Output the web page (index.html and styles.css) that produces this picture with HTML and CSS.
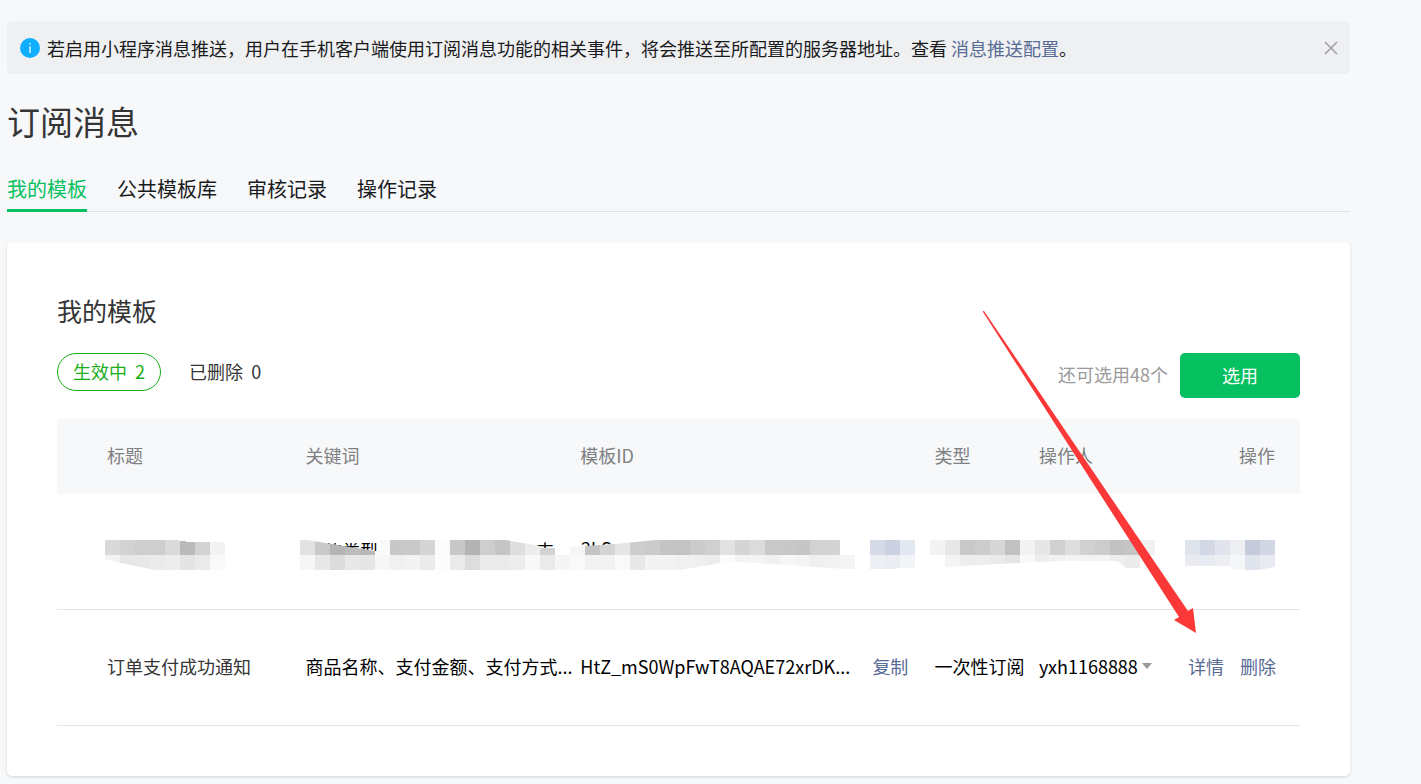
FILE: index.html
```html
<!DOCTYPE html>
<html lang="zh-CN">
<head>
<meta charset="utf-8">
<meta name="viewport" content="width=device-width, initial-scale=1">
<title>订阅消息</title>
<link rel="stylesheet" href="styles.css">
</head>
<body>
<main class="page">
  <div class="notice" role="status">
    <svg class="notice-icon" viewBox="0 0 20 20" aria-hidden="true"><circle cx="10" cy="10" r="10" fill="#10aeff"/><path d="M9.3 5h1.5v1.6H9.3zM9.3 8.2h1.5V15H9.3z" fill="#d4f0ff"/></svg>
    <p class="notice-text">若启用小程序消息推送，用户在手机客户端使用订阅消息功能的相关事件，将会推送至所配置的服务器地址。查看 <a class="link" href="#push">消息推送配置</a>。</p>
    <button class="notice-close" type="button" aria-label="关闭"><svg viewBox="0 0 14 14" aria-hidden="true"><path d="M1 1l12 12M13 1L1 13" stroke="#a2a3a5" stroke-width="1.6" fill="none"/></svg></button>
  </div>

  <h1 class="title">订阅消息</h1>

  <nav class="tabs">
    <a class="tab tab-active" href="#mine" aria-current="page">我的模板</a>
    <a class="tab" href="#public">公共模板库</a>
    <a class="tab" href="#review">审核记录</a>
    <a class="tab" href="#log">操作记录</a>
  </nav>

  <section class="card">
    <h2 class="card-title">我的模板</h2>
    <div class="toolbar">
      <div class="filters">
        <button class="filter filter-active" type="button">生效中&nbsp; 2</button>
        <button class="filter" type="button">已删除&nbsp; 0</button>
      </div>
      <div class="actions">
        <span class="quota">还可选用48个</span>
        <button class="primary" type="button">选用</button>
      </div>
    </div>

    <table class="templates">
      <colgroup>
        <col class="col-title"><col class="col-words"><col class="col-id"><col class="col-copy"><col class="col-type"><col class="col-user"><col class="col-ops">
      </colgroup>
      <thead>
        <tr><th scope="col">标题</th><th scope="col">关键词</th><th scope="col" colspan="2">模板ID</th><th scope="col">类型</th><th scope="col">操作人</th><th scope="col">操作</th></tr>
      </thead>
      <tbody>
        <tr>
          <td class="masked" colspan="7">
            <svg class="mosaic" viewBox="57 531 1243 42" role="img" aria-label="已隐藏">
              <defs>
                <clipPath id="visible-text"><path d="M320 543h58v8h-58zM536 542h19v6h-19zM580 542h35v5h-35z"/></clipPath>
                <clipPath id="shape-title"><path d="M105 540h74v1h7v1h39v28h-70l-34-7-13-3h-3z"/></clipPath>
                <clipPath id="shape-words"><path d="M300 540h7l68 11h5v-11h125l35 6v2h15v7h15v-8l15-1 30-2 40-4h185v15h15v14h-10l-105-7-20 1-40 7H300z"/></clipPath>
                <clipPath id="shape-copy"><path d="M870 540h45v28h-18v1h-27z"/></clipPath>
                <clipPath id="shape-user"><path d="M930 540h225v15h-15v13h-14l-8-7h-58l-40 2-75 4v-12h-15z"/></clipPath>
                <clipPath id="shape-ops"><path d="M1185 540h90v27l-17 3h-25l-4-4h-44z"/></clipPath>
              </defs>
              <g class="mosaic-text" clip-path="url(#visible-text)"><text x="324" y="558">的类型</text><text x="536" y="558">支</text><text x="581" y="556">2kS</text></g>
            </svg>
          </td>
        </tr>
        <tr>
          <td class="cell-title">订单支付成功通知</td>
          <td>商品名称、支付金额、支付方式...</td>
          <td>HtZ_mS0WpFwT8AQAE72xrDK...</td>
          <td><a class="link" href="#copy">复制</a></td>
          <td>一次性订阅</td>
          <td>
            <span class="picker">
              <select class="picker-select" aria-label="操作人"><option>yxh1168888</option></select>
              <svg class="picker-caret" viewBox="0 0 10 6" aria-hidden="true"><path d="M0 0h10L5 6z" fill="#999"/></svg>
            </span>
          </td>
          <td class="cell-ops"><span class="ops"><a class="link" href="#detail">详情</a><a class="link" href="#delete">删除</a></span></td>
        </tr>
      </tbody>
    </table>

    <svg class="arrow" viewBox="0 0 213 322" aria-hidden="true"><path d="M0 0l1 0L205 300l5-3 3 25-22-13 5-3L0 1z" fill="#fb3838"/></svg>
  </section>
</main>
<script src="mosaic.js"></script>
</body>
</html>
```

FILE: styles.css
```css
* { box-sizing: border-box; }

body {
  margin: 0;
  background: #f7f8fa;
  color: #1a1b1c;
  font-family: "Noto Sans CJK SC", "Open Sans", sans-serif;
  font-size: 18px;
  font-weight: 400;
  line-height: 26px;
}

button, select {
  font: inherit;
  color: inherit;
  background: none;
  border: 0;
  padding: 0;
  cursor: pointer;
}

h1, h2, p { margin: 0; font-weight: inherit; }

.link { color: #576b95; text-decoration: none; }

.page { padding: 21px 71px 8px 7px; }

.notice {
  display: flex;
  align-items: center;
  gap: 7px;
  padding: 14px 12px 13px 13px;
  border-radius: 5px;
  background: #eff0f2;
}
.notice-icon { flex: none; width: 20px; height: 20px; }
.notice-text { flex: 1; }
.notice-close { display: flex; }
.notice-close svg { width: 14px; height: 14px; }

.title {
  margin-top: 23px;
  color: #353535;
  font-size: 33px;
  line-height: 48px;
}

.tabs {
  display: flex;
  gap: 30px;
  margin-top: 30px;
  border-bottom: 1px solid #dfe0e2;
}
.tab {
  margin-bottom: -1px;
  padding-bottom: 6px;
  border-bottom: 3px solid transparent;
  color: inherit;
  font-size: 20px;
  line-height: 28px;
  text-decoration: none;
}
.tab-active { color: #07c160; border-color: #07c160; }

.card {
  position: relative;
  margin-top: 30px;
  padding: 50px;
  border-radius: 5px;
  background: #fff;
  box-shadow: 0 1px 3px rgba(0, 0, 0, 0.14);
}
.card-title { color: #353535; font-size: 25px; line-height: 36px; }

.toolbar {
  display: flex;
  justify-content: space-between;
  margin: 25px 0 21px;
}
.filters { display: flex; align-items: flex-start; gap: 12px; }
.filter {
  height: 38px;
  padding: 0 15px 2px;
  border: 1px solid transparent;
  border-radius: 19px;
  color: #353535;
}
.filter-active { color: #1aad19; border-color: #1aad19; }
.actions { display: flex; align-items: center; gap: 12px; }
.quota { padding-bottom: 4px; color: #9a9a9a; }
.primary {
  width: 120px;
  height: 45px;
  padding-bottom: 2px;
  border-radius: 5px;
  background: #07c160;
  color: #fff;
}

.templates {
  width: 100%;
  table-layout: fixed;
  border-collapse: separate;
  border-spacing: 0;
  white-space: nowrap;
}
.col-title { width: 20%; }
.col-words { width: 22.1%; }
.col-id { width: 23.5%; }
.col-copy { width: 5%; }
.col-type { width: 8.4%; }
.col-user { width: 12%; }
.col-ops { width: 9%; }
.templates th {
  height: 75px;
  padding: 0 0 3px;
  background: #f7f8fa;
  color: #7e8081;
  font-weight: inherit;
  text-align: left;
}
.templates td {
  height: 116px;
  padding: 0 0 3px;
  border-bottom: 1px solid #e4e5e7;
  color: #000;
}
.templates th:first-child, .templates .cell-title { padding-left: 50px; }
.templates th:last-child, .templates .cell-ops { padding-right: 25px; text-align: right; }
.templates .cell-title { color: #353535; }
.templates .masked { padding: 0; }

.mosaic { display: block; width: 100%; height: auto; }
.mosaic-text { fill: #000; font-size: 18px; }

.picker { display: inline-flex; align-items: center; gap: 4px; }
.picker-select { appearance: none; }
.picker-caret { width: 10px; height: 6px; }
.ops { display: inline-flex; gap: 16px; }

.arrow {
  position: absolute;
  top: 69px;
  right: 154px;
  width: 213px;
  height: 322px;
  pointer-events: none;
}
```

FILE: mosaic.js
```js
// Two rows of 15px tiles per masked field; each field is clipped to its brushed outline.
const TILE = 15;
const fields = [
  { clip: "shape-title", x: 105,
    top: "d9 d2 ce ce da ba d2 f3",
    bottom: "f3 e7 e8 eb ed e4 ea f9" },
  { clip: "shape-words", x: 300,
    top: "e2 c9 b5 bc b9 f9 c8 c9 d5 fb c8 b3 ce c5 de ec d2 ff f5 c4 d4 e6 cd cb c4 c3 cb d0 e2 d5 dc c9 c8 c6 d2 d3",
    bottom: "f6 e8 dc e8 e6 f6 f0 f3 eb fc ea dd eb eb ed f8 ea f5 f9 f2 f2 f9 e8 f3 f3 f0 f0 ec fb f4 f4 f1 f6 f4 f0 f2 f4" },
  { clip: "shape-copy", x: 870,
    top: "d6dae6 cbd1e1 e4e8f0",
    bottom: "eeeff4 ecedf3 f3f4f8" },
  { clip: "shape-user", x: 930,
    top: "f3 e7 c9 cd d7 c1 f2 e6 d0 de d1 cc c2 c5 f1",
    bottom: "ff f4 ee ee ea e5 f9 ee f1 f4 f3 f3 ed eb" },
  { clip: "shape-ops", x: 1185,
    top: "dfe3ec d4d8e4 e1e4ec eeeff3 c6cbdb d3d7e3",
    bottom: "e9ebf1 e7ebf2 edeff3 f5f6f8 e0e4ec e7eaf0" }
];

const svg = document.querySelector(".mosaic");
const create = (name, attrs) => {
  const node = document.createElementNS("http://www.w3.org/2000/svg", name);
  Object.entries(attrs).forEach(([key, value]) => node.setAttribute(key, value));
  return node;
};

fields.forEach(({ clip, x, top, bottom }) => {
  const group = create("g", { "clip-path": `url(#${clip})`, "shape-rendering": "crispEdges" });
  [top, bottom].forEach((row, r) => {
    row.split(" ").forEach((tone, i) => {
      const fill = "#" + (tone.length === 2 ? tone.repeat(3) : tone);
      group.append(create("rect", { x: x + i * TILE, y: 540 + r * TILE, width: TILE, height: TILE, fill }));
    });
  });
  svg.append(group);
});
```
